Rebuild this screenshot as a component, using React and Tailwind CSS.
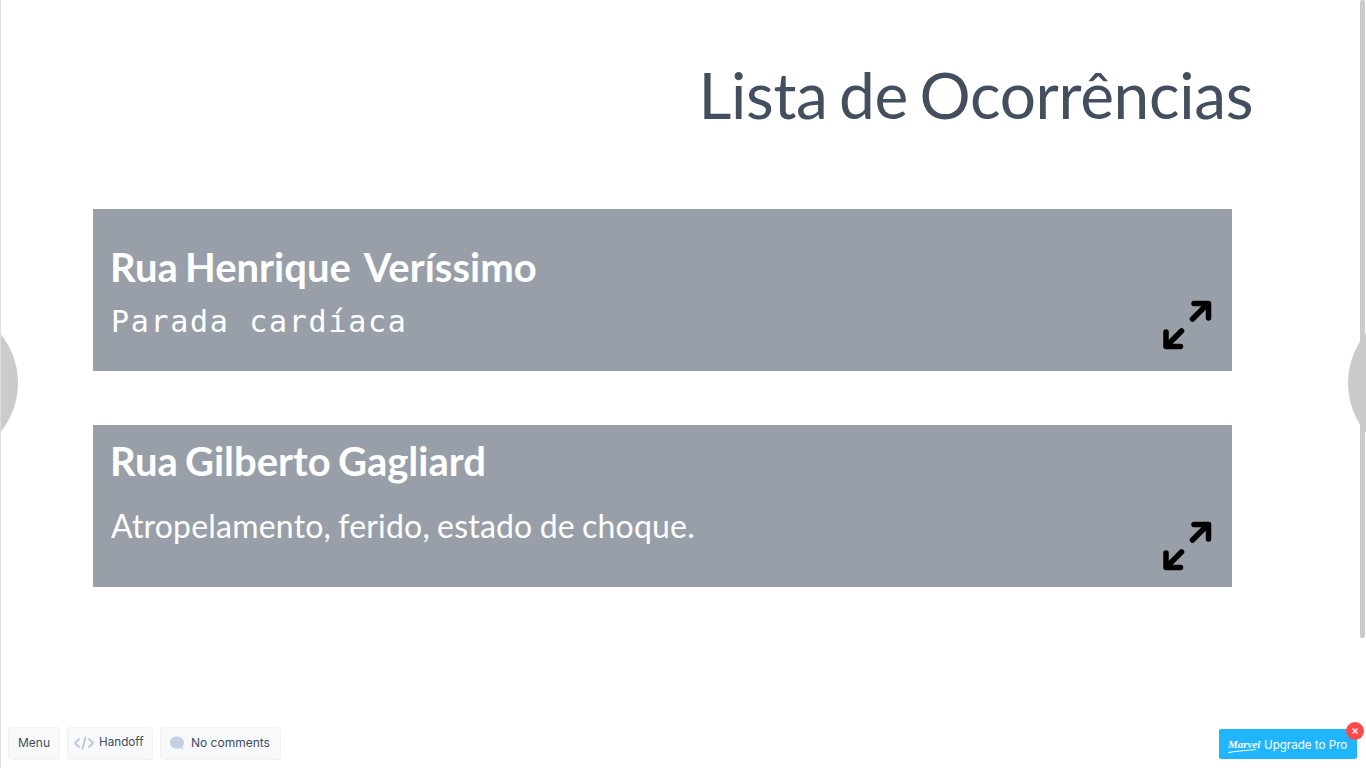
import { X } from 'lucide-react';

const occurrences = [
  {
    street: 'Rua Henrique\u00a0 Veríssimo',
    detail: 'Parada cardíaca',
    headClass: 'pt-[33px]',
    detailClass: "mt-[12px] font-['DejaVu_Sans_Mono',monospace] text-[30px] leading-[36px] tracking-[1.7px]",
    iconClass: 'mt-[-41px] mb-[20px]',
  },
  {
    street: 'Rua Gilberto Gagliard',
    detail: 'Atropelamento, ferido, estado de choque.',
    headClass: 'pt-[11px]',
    detailClass: "mt-[20px] font-['Lato',sans-serif] text-[32px] leading-[40px] tracking-[0.2px] [word-spacing:-1.200px]",
    iconClass: 'mt-[-26px] mb-[14px]',
  },
];

function ExpandIcon() {
  return (
    <svg width="52" height="52" viewBox="0 0 52 52" fill="none" stroke="#000" strokeWidth="5.500" strokeLinecap="round" strokeLinejoin="round">
      <path d="M33 4.500h14.500v14.500" />
      <path d="M46.500 5L31.500 20" />
      <path d="M5 33v14.500h14.500" />
      <path d="M5.500 47L20.500 32" />
    </svg>
  );
}

function OccurrenceCard({ item }) {
  return (
    <div className="h-[162px] bg-[#989fa9] pl-[18px] pr-[19px] text-white">
      <div className={item.headClass}>
        <h2 className="ml-[-1px] font-['Lato',sans-serif] text-[40px] leading-[50px] font-bold [word-spacing:-2.500px] whitespace-pre">{item.street}</h2>
        <p className={item.detailClass}>{item.detail}</p>
      </div>
      <div className={`flex justify-end ${item.iconClass}`}>
        <ExpandIcon />
      </div>
    </div>
  );
}

function ToolButton({ className, children }) {
  return (
    <div className={`flex h-[33px] items-center rounded-[3px] border border-[#f0f2f5] bg-[#f8f9fb] pb-[1px] pl-[9px] font-['Inter',sans-serif] text-[12px] text-[#3f4d5e] ${className}`}>
      {children}
    </div>
  );
}

export default function App() {
  return (
    <div className="relative h-[768px] overflow-hidden border-l border-[#dedede] bg-white">
      <div className="w-[1365px]">
        <h1 className="pt-[55px] pr-[113px] text-right font-['Lato',sans-serif] text-[64px] leading-[80px] font-normal tracking-[-0.35px] [word-spacing:-4.500px] text-[#434f5e]">
          Lista de Ocorrências
        </h1>
        <div className="mt-[74px] ml-[92px] flex w-[1139px] flex-col gap-[54px]">
          {occurrences.map((item) => (
            <OccurrenceCard key={item.street} item={item} />
          ))}
        </div>
      </div>

      {/* prev / next arrows of the prototype */}
      <div className="absolute top-[305px] left-[-139px] h-[156px] w-[156px] rounded-full bg-[#cbcbcb]" />
      <div className="absolute top-[305px] left-[1347px] h-[156px] w-[156px] rounded-full bg-[#cbcbcb]" />

      {/* scrollbar */}
      <div className="absolute top-0 left-[1359px] h-[638px] w-[5px] rounded-[2px] bg-[#cbcbcb]" />

      {/* marvel toolbar */}
      <div className="absolute top-[727px] left-[7px] flex gap-[7px]">
        <ToolButton className="w-[52px]">Menu</ToolButton>
        <ToolButton className="w-[86px]">
          <svg width="20" height="14" viewBox="0 0 20 14" fill="none" stroke="#b9c9dc" strokeWidth="1.800" strokeLinecap="round" strokeLinejoin="round" className="mr-[5px] ml-[-3px]">
            <path d="M5 3L1 7l4 4" />
            <path d="M15 3l4 4-4 4" />
            <path d="M11.500 1.500L8.500 12.500" />
          </svg>
          <span className="text-[11.700px]">Handoff</span>
        </ToolButton>
        <ToolButton className="w-[121px]">
          <svg width="16" height="16" viewBox="0 0 16 16" className="mr-[6px] ml-[-1px]">
            <path fill="#c3d0e0" d="M8 1.500c4 0 7 2.500 7 6 0 1.800-.7 3.400-1.500 4.300l1 2.700-3.500-1.500c-1 .4-2 .6-3 .6-3.900 0-7-2.400-7-6.100 0-3.500 3-6 7-6z" />
          </svg>
          No comments
        </ToolButton>
      </div>

      <div className="absolute top-[729px] left-[1218px] flex h-[30px] w-[138px] items-center rounded-[2px] bg-[#1fb6ff] pl-[9px] text-white">
        <div className="relative mr-[6px] w-[30px]">
          <span className="block font-['Liberation_Serif',serif] text-[11px] leading-[14px] font-bold italic">Marvel</span>
          <svg width="30" height="4" viewBox="0 0 30 4" fill="none" stroke="#fff" strokeWidth="1" className="absolute top-[12px] left-[-1px]">
            <path d="M1 3.500C10 2 20 1.500 29 .5" />
          </svg>
        </div>
        <span className="mt-[3px] font-['Inter',sans-serif] text-[11.600px]">Upgrade to Pro</span>
      </div>
      <div className="absolute top-[722px] left-[1345px] flex h-[18px] w-[18px] items-center justify-center rounded-full bg-[#ff4949] text-white">
        <X size={8} strokeWidth={4} />
      </div>
    </div>
  );
}
